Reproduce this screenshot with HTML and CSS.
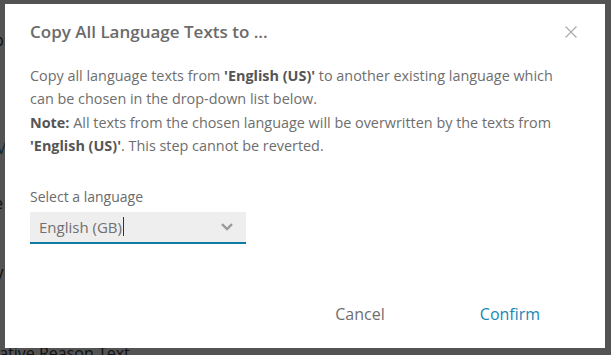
FILE: index.html
```html
<!DOCTYPE html>
<html>
<head>
    <title>Copy All Language Texts</title>
    <link rel="stylesheet" href="styles.css">
</head>
<body>
    <div class="page">
        <p class="page-line first">p</p>
        <p class="page-line link">M</p>
        <p class="page-line mid">e</p>
        <p class="page-line last">V</p>
        <p class="page-footer">Alternative Reason Text</p>
    </div>

    <div class="overlay">
        <div class="dialog">
            <div class="dialog-header">
                <h2 class="dialog-title">Copy All Language Texts to ...</h2>
                <button class="close-btn" type="button" aria-label="Close">
                    <svg width="12" height="12" viewBox="0 0 12 12">
                        <path d="M0.5 0.5 L11.5 11.5 M11.5 0.5 L0.5 11.5" stroke="#a8a8a8" stroke-width="1.1" fill="none"/>
                    </svg>
                </button>
            </div>
            <div class="dialog-body">
                <p class="info">
                    Copy all language texts from <b>'English (US)'</b> to another existing language which
                    can be chosen in the drop-down list below.<br>
                    <b>Note:</b> All texts from the chosen language will be overwritten by the texts from
                    <b>'English (US)'</b>. This step cannot be reverted.
                </p>
                <label class="field-label" for="language">Select a language</label>
                <div class="select-box" id="language">
                    <span class="select-value">English (GB)<span class="caret"></span></span>
                    <svg class="chevron" width="12" height="8" viewBox="0 0 12 8">
                        <path d="M1 1.2 L6 6 L11 1.2" stroke="#9a9a9a" stroke-width="2.4" fill="none"/>
                    </svg>
                </div>
            </div>
            <div class="dialog-footer">
                <button class="btn btn-cancel" type="button">Cancel</button>
                <button class="btn btn-confirm" type="button">Confirm</button>
            </div>
        </div>
    </div>
</body>
</html>
```

FILE: styles.css
```css
body {
    font-family: "Open Sans", "Liberation Sans", sans-serif;
    background-color: #f2f2f2;
    margin: 0;
    padding: 0;
    width: 611px;
    height: 355px;
    overflow: hidden;
}

.page {
    padding-top: 30px;
    color: #333;
    font-size: 16px;
}

.page-line {
    margin: 0 0 0 -6px;
    height: 20px;
    line-height: 20px;
}

.page-line.link {
    color: #1a6f9a;
    margin-top: 88px;
}

.page-line.mid {
    margin-top: 35px;
}

.page-line.last {
    margin-top: 52px;
}

.page-footer {
    margin: 0 0 0 -46px;
    padding-top: 57px;
    font-size: 16px;
    white-space: nowrap;
}

.overlay {
    position: fixed;
    top: 0;
    left: 0;
    right: 0;
    bottom: 0;
    background-color: rgba(0, 0, 0, 0.66);
}

.dialog {
    position: absolute;
    left: 5px;
    top: 4px;
    width: 600px;
    height: 344px;
    background-color: #fff;
    box-sizing: border-box;
    display: flex;
    flex-direction: column;
}

.dialog-header {
    display: flex;
    justify-content: space-between;
    align-items: center;
    padding: 16px 28px 0 25px;
    height: 24px;
}

.dialog-title {
    margin: 0;
    font-size: 17px;
    font-weight: 600;
    color: #6b6b6b;
    line-height: 24px;
}

.close-btn {
    border: none;
    background: none;
    padding: 0;
    width: 12px;
    height: 12px;
    display: flex;
    cursor: pointer;
}

.dialog-body {
    padding: 20px 40px 0 25px;
    flex: 1;
}

.info {
    margin: 0;
    font-size: 14.4px;
    line-height: 23.4px;
    color: #6e6e6e;
}

.info b {
    font-weight: 700;
    color: #555;
}

.field-label {
    display: block;
    margin-top: 29px;
    font-size: 14px;
    line-height: 20px;
    color: #6b6b6b;
}

.select-box {
    margin-top: 5px;
    width: 216px;
    height: 32px;
    box-sizing: border-box;
    background-color: #eee;
    border-bottom: 2px solid #0f7aa3;
    display: flex;
    align-items: center;
    justify-content: space-between;
    padding: 0 13px 0 9px;
}

.select-value {
    font-size: 15px;
    color: #707070;
    display: flex;
    align-items: center;
}

.caret {
    display: inline-block;
    width: 1px;
    height: 19px;
    background-color: #333;
    margin-left: 1px;
}

.dialog-footer {
    display: flex;
    justify-content: flex-end;
    gap: 50px;
    padding: 0 45px 16px 0;
}

.btn {
    width: 100px;
    height: 36px;
    border: none;
    background: none;
    font-family: "Open Sans", "Liberation Sans", sans-serif;
    font-size: 16px;
    cursor: pointer;
}

.btn-cancel {
    color: #6e6e6e;
}

.btn-confirm {
    color: #1a88b5;
}
```
